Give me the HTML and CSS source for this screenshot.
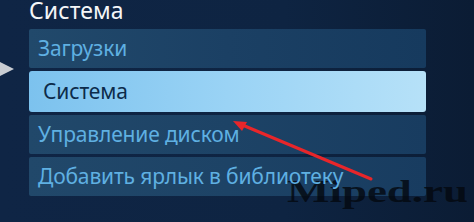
FILE: index.html
```html
<!DOCTYPE html>
<html lang="ru">
<head>
<meta charset="utf-8">
<link rel="stylesheet" href="styles.css">
</head>
<body>
<div class="screen">
  <div class="pointer"></div>
  <div class="panel">
    <div class="title">Система</div>
    <ul class="menu">
      <li class="item"><span class="label">Загрузки</span></li>
      <li class="item active"><span class="label">Система</span></li>
      <li class="item"><span class="label">Управление диском</span></li>
      <li class="item"><span class="label">Добавить ярлык в библиотеку</span></li>
    </ul>
  </div>
  <svg class="arrow" width="474" height="222" viewBox="0 0 474 222">
    <line x1="371" y1="179" x2="240" y2="124" stroke="#e8262a" stroke-width="3" stroke-linecap="round"/>
    <polygon points="233,121 247,122 242,131" fill="#e8262a"/>
  </svg>
  <div class="watermark">Miped.ru</div>
</div>
</body>
</html>
```
FILE: styles.css
```css
html, body {
  margin: 0;
  padding: 0;
}
body {
  width: 474px;
  height: 222px;
  overflow: hidden;
  font-family: "Noto Sans", "Open Sans", sans-serif;
}
.screen {
  position: relative;
  width: 474px;
  height: 222px;
  background: linear-gradient(90deg, #0f2545 0%, #0e2442 60%, #0b1c34 100%);
  overflow: hidden;
}
.panel {
  padding-left: 29px;
  width: 397px;
  display: flex;
  flex-direction: column;
}
.title {
  color: #f4f6f8;
  font-size: 23px;
  line-height: 29px;
  height: 29px;
  margin-top: -4px;
  margin-bottom: 4px;
  letter-spacing: 0.1px;
}
.menu {
  list-style: none;
  margin: 0;
  padding: 0;
  display: flex;
  flex-direction: column;
  gap: 3px;
}
.item {
  height: 39px;
  line-height: 39px;
  padding-left: 9px;
  font-size: 21px;
  color: #5fb0e2;
  background: linear-gradient(90deg, #21496b 0%, #1b4064 50%, #163a5e 100%);
  border-radius: 2px;
  white-space: nowrap;
  letter-spacing: -0.15px;
}
.label {
  position: relative;
  z-index: 2;
}
.item:nth-child(3),
.item:nth-child(4) {
  background: linear-gradient(90deg, #21486a 0%, #1d4366 50%, #183c60 100%);
}
.item.active {
  height: 41px;
  line-height: 41px;
  padding-left: 14px;
  color: #0c2b4a;
  background: linear-gradient(90deg, #7cc2ee 0%, #9ad3f5 50%, #b6e1f8 100%);
  border-radius: 3px;
}
.pointer {
  position: absolute;
  left: -6px;
  top: 59px;
  width: 0;
  height: 0;
  border-top: 10px solid transparent;
  border-bottom: 10px solid transparent;
  border-left: 20px solid #c9cdd3;
}
.arrow {
  position: absolute;
  left: 0;
  top: 0;
  z-index: 3;
}
.watermark {
  position: absolute;
  z-index: 1;
  left: 287px;
  top: 174px;
  font-family: "Liberation Serif", serif;
  font-weight: bold;
  font-size: 31px;
  line-height: 36px;
  color: rgba(4, 9, 16, 0.82);
  transform: scaleX(1.45);
  transform-origin: 0 0;
  white-space: nowrap;
}
```
